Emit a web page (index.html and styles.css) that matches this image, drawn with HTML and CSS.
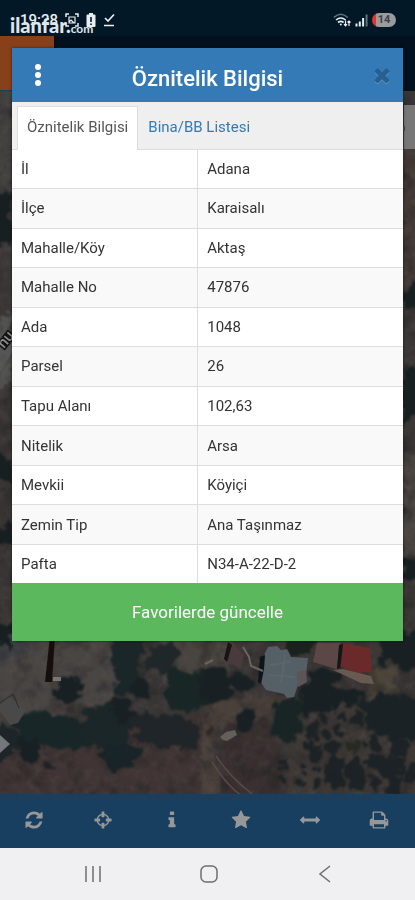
FILE: index.html
```html
<!DOCTYPE html>
<html lang="tr">

<head>
    <meta charset="UTF-8">
    <meta name="viewport" content="width=device-width, initial-scale=1.0">
    <title>Öznitelik Bilgisi</title>
    <link rel="stylesheet" href="styles.css">
</head>

<body>
    <div class="status-bar">
        <span class="watermark">ilanfar.<small>com</small></span>
        <div class="status-left">
            <span class="clock">19:28</span>
            <svg width="14" height="14" viewBox="0 0 14 14" fill="none" stroke="currentColor" stroke-width="1.5">
                <path d="M1 4V1h3M10 1h3v3M13 10v3h-3M4 13H1v-3" />
                <path d="M4 4h6v6H4zM4 9l2-2 3 3" stroke-width="1.2" />
            </svg>
            <svg width="10" height="14" viewBox="0 0 10 14">
                <path d="M3 0h4v1.500h1.500q1 0 1 1V13q0 1-1 1h-7q-1 0-1-1V2.500q0-1 1-1H3z" fill="currentColor" />
                <path d="M5 4v5M5 10.500v1.500" stroke="#021827" stroke-width="1.600" />
            </svg>
            <svg width="12" height="14" viewBox="0 0 12 14" fill="none" stroke="currentColor" stroke-width="1.700">
                <path d="M2 5l3 3 6-6.500M1 12.500h10" />
            </svg>
        </div>
        <div class="status-right">
            <svg width="18" height="14" viewBox="0 0 18 14" fill="none" stroke="currentColor" stroke-width="1.600">
                <path d="M.8 4.500q7-6.500 14 0" stroke="#60707c" />
                <path d="M3 7q4.800-4 9.600 0M5 9.500q2.800-2.200 5.600 0" />
                <circle cx="7.800" cy="11.500" r="1" fill="currentColor" stroke="none" />
                <path d="M12.500 7.500V13M11 11.200l1.500 1.600 1.500-1.600M16 13V8M14.500 9.500L16 8l1.500 1.500" stroke-width="1.200" />
            </svg>
            <svg width="13" height="14" viewBox="0 0 13 14" stroke="currentColor" stroke-width="2">
                <path d="M1.500 13.500v-3M4.800 13.500v-5M8.100 13.500V5" />
                <path d="M11.600 13.500v-12" stroke="#60707c" />
            </svg>
            <span class="battery">14</span>
        </div>
    </div>

    <div class="app-header">
        <div class="app-logo"></div>
    </div>

    <main class="map">
        <svg class="map-image" viewBox="0 91 415 703" preserveAspectRatio="xMidYMax slice" aria-hidden="true">
            <defs>
                <filter id="rough" x="-5%" y="-5%" width="110%" height="110%" color-interpolation-filters="sRGB">
                    <feTurbulence type="fractalNoise" baseFrequency="0.09" numOctaves="3" seed="4" result="n" />
                    <feDisplacementMap in="SourceGraphic" in2="n" scale="18" xChannelSelector="R" yChannelSelector="G" />
                    <feGaussianBlur stdDeviation="1" />
                </filter>
                <filter id="soft">
                    <feGaussianBlur stdDeviation="0.6" />
                </filter>
                <filter id="grain" x="0" y="0" width="100%" height="100%" color-interpolation-filters="sRGB">
                    <feTurbulence type="fractalNoise" baseFrequency="0.06" numOctaves="4" seed="9" />
                    <feColorMatrix values="0 0 0 0 0.09  0 0 0 0 0.1  0 0 0 0 0.1  2.5 0 0 0 -1.05" />
                </filter>
                <filter id="light" x="0" y="0" width="100%" height="100%" color-interpolation-filters="sRGB">
                    <feTurbulence type="fractalNoise" baseFrequency="0.12" numOctaves="3" seed="21" />
                    <feColorMatrix values="0 0 0 0 0.42  0 0 0 0 0.42  0 0 0 0 0.41  2.5 0 0 0 -1.1" />
                </filter>
            </defs>
            <rect y="91" width="415" height="703" fill="#3b3736" />
            <g filter="url(#rough)">
                <path d="M-10 630h125v70l-50 12-75 20z" fill="#494543" />
                <path d="M-10 630h66L-10 672z" fill="#3e4045" />
                <path d="M-10 740q70-35 160-15l60-15v99H-10z" fill="#403534" />
                <path d="M160 630h75l-10 60-60 20z" fill="#48443f" />
                <path d="M205 700l88-5-40 30-45 5 16 74h-24z" fill="#4a403b" />
                <path d="M225 725l45-5 30 89h-80z" fill="#3a3030" />
                <path d="M290 715l40-25 90 10v109H288z" fill="#3f3936" />
                <path d="M372 672l25-5v25l-28 6z" fill="#4b4439" />
                <path d="M-10 91h22v160h-22z" fill="#444141" />
                <path d="M-10 330l22-20v70l-22 20z" fill="#51524f" />
                <path d="M403 150h22v135h-22z" fill="#453b37" />
                <path d="M403 455h22v100h-22z" fill="#4b4541" />
            </g>
            <rect y="91" width="415" height="703" filter="url(#light)" opacity=".14" />
            <rect y="91" width="415" height="703" filter="url(#grain)" opacity=".35" />
            <g filter="url(#rough)" fill="#182024">
                <path d="M112 635h30l1 33-10 26-18-2z" fill="#1b2629" />
                <path d="M148 654l24-13 9 16-10 13-27-1z" fill="#20272a" />
                <path d="M168 669l28 3 14-3v36l-20 9-25-9z" fill="#182626" />
                <path d="M200 668l22-1 12 10-5 22-17 5-12-4z" />
                <path d="M56 678l22-2 4 20-14 8-12-7z" />
                <path d="M12 718l28-8 20 5 30 5 8 25-25 8-32-8-20-4z" fill="#192627" />
                <path d="M83 710l29-8 21 14-2 27-22 6-24-10z" fill="#1b2628" />
                <path d="M130 716l22-3 30 4 17 10-5 19-27 2-30-8z" fill="#1f2528" />
                <path d="M96 752l25-9 19 3-5 22-25 2z" fill="#182427" />
                <path d="M16 739l24 1 3 19-13 5-12-9z" />
                <path d="M-8 728l20-4 8 16-12 22h-16z" fill="#1e2528" />
                <path d="M113 696l14 3 7 18-12 9-11-15z" />
                <path d="M133 681l13-2 5 12-10 9-9-8z" />
                <path d="M284 636h30v15l-16 4-13-6z" fill="#18221f" />
                <path d="M380 632h43v38l-24-3-8-10-9 8z" />
                <path d="M235 672l14-1 5 14-12 7-9-8z" />
                <path d="M274 704l18-7 12 6-4 30-14 10-14-12z" fill="#182524" />
                <path d="M300 690l16-9 24 8-2 19-22 8-17-6z" />
                <path d="M310 670l17-2 14 9-8 13-23-6z" />
                <path d="M336 691l22-4 7 13-20 7z" />
                <path d="M361 703l19-9 22 4 23-3v42l-28 4-28-7z" fill="#1a2226" />
                <path d="M236 711l18-3-3 21-12 7z" />
            </g>
            <g filter="url(#rough)" fill="#171f21">
                <path d="M-8 190l20 5v50H-8z" />
                <path d="M-8 450l20 10v22H-8zM-8 530l20-8v22H-8zM-8 625h20v25l-12-3z" />
                <path d="M403 290l20-8v20l-20 8zM403 365l20 5v45l-20 7zM403 560l20 5v18l-20-4z" />
            </g>
            <!-- orchard -->
            <g filter="url(#rough)" fill="#1c2225">
                <circle cx="325" cy="718" r="5" />
                <circle cx="342" cy="717" r="5" />
                <circle cx="356" cy="718" r="7" />
                <circle cx="312" cy="732" r="7" />
                <circle cx="325" cy="735" r="5" />
                <circle cx="339" cy="733" r="5" />
                <circle cx="315" cy="750" r="9" />
                <circle cx="333" cy="748" r="7" />
                <circle cx="355" cy="747" r="8" fill="#282923" />
                <circle cx="373" cy="744" r="8" />
                <circle cx="399" cy="747" r="10" />
                <circle cx="336" cy="765" r="10" />
                <ellipse cx="356" cy="773" rx="9" ry="16" />
                <circle cx="335" cy="782" r="9" />
                <circle cx="375" cy="762" r="9" />
                <circle cx="391" cy="767" r="11" />
                <circle cx="375" cy="782" r="6" />
                <circle cx="393" cy="784" r="9" />
                <circle cx="410" cy="775" r="10" />
                <circle cx="284" cy="763" r="6" />
                <circle cx="304" cy="769" r="3" />
                <circle cx="317" cy="768" r="3" />
                <circle cx="282" cy="780" r="4" />
                <circle cx="302" cy="783" r="3" />
                <circle cx="318" cy="784" r="3" />
                <circle cx="211" cy="730" r="4" fill="#302723" />
                <circle cx="49" cy="767" r="5" />
            </g>
            <!-- buildings and tracks -->
            <g filter="url(#soft)">
                <path d="M50 636h5l-3 46h-7z" fill="#171111" />
                <path d="M231 641l13 14-3 14-14-8z" fill="#4a3a3b" />
                <path d="M228 642l4 3-5 17-3-3z" fill="#131417" />
                <path d="M265 653l3-6 9-1 4 4 6-1 4 8 17 1-3 24-7 3-4 12-7 1-3-4-18-4-6-9z" fill="#555e66" />
                <path d="M270 665l20-3M268 675l26 2M285 655l-4 28" stroke="#5c656c" stroke-width="2" />
                <path d="M260 657l5-2-1 14-3 15-3-2z" fill="#101418" />
                <path d="M297 672l9-2 1 12-9 5z" fill="#5c5558" />
                <path d="M317 643h23l-3 26-24-7z" fill="#5c4647" />
                <path d="M343 643l27 5 2 24-13 1-18-6z" fill="#6a292a" />
                <path d="M339 645l4-1-3 24-3 1z" fill="#151315" />
                <path d="M333 670l10-1 28 7 3 8-13-1z" fill="#675a52" />
                <path d="M243 647l6 10 2 9 12 5M205 664l8-4" fill="none" stroke="#68635c" stroke-width="2" />
                <path d="M53 677h8v4h-8z" fill="#787675" />
                <path d="M0 705l9-9 17 14-8 13-8 2-10-14z" fill="#4a4948" />
                <path d="M0 703l13-9 6 14" fill="none" stroke="#2c2929" />
                <path d="M0 735l10 9-10 9z" fill="#74777a" />
                <path d="M220 737l6-5 9-2 2 5-10 6-4-1z" fill="#625e5b" />
                <path d="M216 756q13 20 36 38M212 762q15 24 30 34" fill="none" stroke="#564a44" stroke-width="1.500" />
                <path d="M0 346l12-13v20L0 372z" fill="#5d5f60" opacity=".5" />
                <path d="M404 105h11v44h-11z" fill="#777" />
                <path d="M403 126h2v5h-2z" fill="#474747" />
            </g>
            <text x="4" y="349" class="road-name" transform="rotate(-50 4 349)">nu</text>
        </svg>
    </main>

    <div class="toolbar">
        <button class="tool" aria-label="Yenile"><svg class="icon" viewBox="0 0 1792 1792"><path d="M1639 1056q0 5-1 7-64 268-268 434.500t-478 166.500q-146 0-282.500-55t-243.500-157l-129 129q-19 19-45 19t-45-19-19-45v-448q0-26 19-45t45-19h448q26 0 45 19t19 45-19 45l-137 137q71 66 161 102t187 36q134 0 250-65t186-179q11-17 53-117 8-23 30-23h192q13 0 22.500 9.500t9.500 22.500zm25-800v448q0 26-19 45t-45 19h-448q-26 0-45-19t-19-45 19-45l138-138q-148-137-349-137-134 0-250 65t-186 179q-11 17-53 117-8 23-30 23h-199q-13 0-22.500-9.500t-9.500-22.500v-7q65-268 270-434.500t480-166.500q146 0 284 55.500t245 156.500l130-129q19-19 45-19t45 19 19 45z" /></svg></button>
        <button class="tool" aria-label="Konum"><svg class="icon" viewBox="0 0 1792 1792"><path d="M1325 1024h-109q-26 0-45-19t-19-45v-128q0-26 19-45t45-19h109q-32-108-112.500-188.500t-188.500-112.500v109q0 26-19 45t-45 19h-128q-26 0-45-19t-19-45v-109q-108 32-188.500 112.500t-112.500 188.500h109q26 0 45 19t19 45v128q0 26-19 45t-45 19h-109q32 108 112.500 188.500t188.500 112.500v-109q0-26 19-45t45-19h128q26 0 45 19t19 45v109q108-32 188.500-112.500t112.500-188.500zm339-192v128q0 26-19 45t-45 19h-143q-37 161-154.500 278.500t-278.500 154.500v143q0 26-19 45t-45 19h-128q-26 0-45-19t-19-45v-143q-161-37-278.500-154.500t-154.500-278.500h-143q-26 0-45-19t-19-45v-128q0-26 19-45t45-19h143q37-161 154.500-278.500t278.500-154.500v-143q0-26 19-45t45-19h128q26 0 45 19t19 45v143q161 37 278.500 154.500t154.500 278.500h143q26 0 45 19t19 45z" /></svg></button>
        <button class="tool" aria-label="Bilgi"><svg class="icon" viewBox="0 0 1792 1792"><path d="M1216 1344v128q0 26-19 45t-45 19h-512q-26 0-45-19t-19-45v-128q0-26 19-45t45-19h64v-384h-64q-26 0-45-19t-19-45v-128q0-26 19-45t45-19h384q26 0 45 19t19 45v576h64q26 0 45 19t19 45zm-128-1152v192q0 26-19 45t-45 19h-256q-26 0-45-19t-19-45v-192q0-26 19-45t45-19h256q26 0 45 19t19 45z" /></svg></button>
        <button class="tool" aria-label="Favoriler"><svg class="icon" viewBox="0 0 1792 1792"><path d="M1728 647q0 22-26 48l-363 354 86 500q1 7 1 20 0 21-10.500 35.500t-30.500 14.500q-19 0-40-12l-449-236-449 236q-22 12-40 12-21 0-31.500-14.500t-10.500-35.500q0-6 2-20l86-500-364-354q-25-27-25-48 0-37 56-46l502-73 225-455q19-41 49-41t49 41l225 455 502 73q56 9 56 46z" /></svg></button>
        <button class="tool" aria-label="Ölçüm"><svg class="icon" viewBox="0 0 1792 1792"><path d="M1792 896q0 26-19 45l-256 256q-19 19-45 19t-45-19-19-45v-128h-1024v128q0 26-19 45t-45 19-45-19l-256-256q-19-19-19-45t19-45l256-256q19-19 45-19t45 19 19 45v128h1024v-128q0-26 19-45t45-19 45 19l256 256q19 19 19 45z" /></svg></button>
        <button class="tool" aria-label="Yazdır"><svg class="icon" viewBox="0 0 1792 1792"><path d="M448 1536h896v-256h-896v256zm0-640h896v-384h-160q-40 0-68-28t-28-68v-160h-640v640zm1152 64q0-26-19-45t-45-19-45 19-19 45 19 45 45 19 45-19 19-45zm128 0v416q0 13-9.500 22.500t-22.500 9.500h-224v160q0 40-28 68t-68 28h-960q-40 0-68-28t-28-68v-160h-224q-13 0-22.500-9.500t-9.500-22.500v-416q0-79 56.500-135.500t135.500-56.500h64v-544q0-40 28-68t68-28h672q40 0 88 20t76 48l152 152q28 28 48 76t20 88v256h64q79 0 135.500 56.500t56.500 135.500z" /></svg></button>
    </div>

    <div class="nav-bar">
        <button class="nav-button" aria-label="Son uygulamalar"><svg width="18" height="18" viewBox="0 0 18 18"><path d="M2 1v16M9 1v16M16 1v16" /></svg></button>
        <button class="nav-button" aria-label="Ana ekran"><svg width="18" height="18" viewBox="0 0 18 18"><rect x="1" y="1" width="16" height="16" rx="5" /></svg></button>
        <button class="nav-button" aria-label="Geri"><svg width="18" height="18" viewBox="0 0 18 18"><path d="M14 1L4 9l10 8" /></svg></button>
    </div>

    <div class="modal" role="dialog" aria-labelledby="modalTitle">
        <div class="modal-header">
            <button class="menu-button" aria-label="Menü"><svg width="8" height="24" viewBox="0 0 8 24"><circle cx="4" cy="4" r="3" /><circle cx="4" cy="12" r="3" /><circle cx="4" cy="20" r="3" /></svg></button>
            <h1 id="modalTitle">Öznitelik Bilgisi</h1>
            <button class="close-button" aria-label="Kapat"><svg width="22" height="22" viewBox="0 0 1792 1792"><path d="M1490 1322q0 40-28 68l-136 136q-28 28-68 28t-68-28l-294-294-294 294q-28 28-68 28t-68-28l-136-136q-28-28-28-68t28-68l294-294-294-294q-28-28-28-68t28-68l136-136q28-28 68-28t68 28l294 294 294-294q28-28 68-28t68 28l136 136q28 28 28 68t-28 68l-294 294 294 294q28 28 28 68z" /></svg></button>
        </div>
        <nav class="tabs">
            <a href="#oznitelik" class="tab active">Öznitelik Bilgisi</a>
            <a href="#bina" class="tab">Bina/BB Listesi</a>
        </nav>
        <table class="info-table" id="oznitelik">
            <tbody>
                <tr><th scope="row">İl</th><td>Adana</td></tr>
                <tr><th scope="row">İlçe</th><td>Karaisalı</td></tr>
                <tr><th scope="row">Mahalle/Köy</th><td>Aktaş</td></tr>
                <tr><th scope="row">Mahalle No</th><td>47876</td></tr>
                <tr><th scope="row">Ada</th><td>1048</td></tr>
                <tr><th scope="row">Parsel</th><td>26</td></tr>
                <tr><th scope="row">Tapu Alanı</th><td>102,63</td></tr>
                <tr><th scope="row">Nitelik</th><td>Arsa</td></tr>
                <tr><th scope="row">Mevkii</th><td>Köyiçi</td></tr>
                <tr><th scope="row">Zemin Tip</th><td>Ana Taşınmaz</td></tr>
                <tr><th scope="row">Pafta</th><td>N34-A-22-D-2</td></tr>
            </tbody>
        </table>
        <button class="favorite-button">Favorilerde güncelle</button>
    </div>
</body>

</html>
```

FILE: styles.css
```css
* {
    box-sizing: border-box;
}

body {
    position: relative;
    display: flex;
    flex-direction: column;
    min-height: 100vh;
    margin: 0;
    font-family: Roboto, "Liberation Sans", sans-serif;
    font-size: 15px;
    line-height: 20px;
    color: #333;
    background-color: #02111d;
}

button {
    padding: 0;
    border: none;
    background: none;
    font: inherit;
    cursor: pointer;
}

svg {
    display: block;
}

.status-bar {
    position: relative;
    display: flex;
    justify-content: space-between;
    align-items: center;
    padding: 4px 19px 0 20px;
    height: 36px;
    color: #e8eef2;
    background-color: #021827;
}

.status-left,
.status-right {
    display: flex;
    align-items: center;
    gap: 7px;
}

.status-right {
    gap: 4px;
}

.clock {
    font-size: 15px;
    font-weight: 500;
}

/* site mark printed over the clock */
.watermark {
    position: absolute;
    top: 15px;
    left: 10px;
    font-family: Lato, "Open Sans", sans-serif;
    font-size: 20px;
    font-weight: 900;
    color: #dfe5e9;
}

.watermark small {
    font-size: 12px;
    font-weight: 700;
}

.battery {
    width: 24px;
    border-radius: 7px;
    font-size: 11px;
    font-weight: 700;
    line-height: 14px;
    text-align: center;
    color: #3c4247;
    background: linear-gradient(to right, #e2352f 4px, #999b9e 4px);
}

.app-header {
    height: 55px;
}

.app-logo {
    width: 54px;
    height: 100%;
    background-color: #88401b;
    border-bottom: 1px solid #164257;
}

.map {
    position: relative;
    flex: 1;
    overflow: hidden;
}

.map-image {
    position: absolute;
    width: 100%;
    height: 100%;
}

.road-name {
    font-size: 15px;
    font-weight: 500;
    fill: #8c8c8c;
    stroke: #111;
    stroke-width: 3px;
    paint-order: stroke;
}

.toolbar {
    display: grid;
    grid-template-columns: repeat(6, 1fr);
    height: 54px;
    padding: 0 2px 2px 0;
    background-color: #193f60;
}

.tool {
    display: flex;
    justify-content: center;
    align-items: center;
}

.icon {
    width: 20px;
    height: 20px;
    fill: #959799;
}

.nav-bar {
    display: grid;
    grid-template-columns: repeat(3, 1fr);
    height: 52px;
    padding: 0 32px 0 35px;
    background-color: #f0f0f3;
}

.nav-button {
    display: flex;
    justify-content: center;
    align-items: center;
}

.nav-button svg {
    fill: none;
    stroke: #6d6d70;
    stroke-width: 1.5px;
}

.modal {
    position: absolute;
    top: 48px;
    left: 12px;
    right: 12px;
    background-color: #fff;
    box-shadow: 0 0 3px rgba(0, 0, 0, 0.5);
}

.modal-header {
    display: grid;
    grid-template-columns: 52px 1fr 52px;
    align-items: center;
    height: 54px;
    background-color: #337ab7;
}

.modal-header h1 {
    margin: 0;
    padding-top: 8px;
    font-size: 22px;
    font-weight: 500;
    line-height: 28px;
    text-align: center;
    color: #fff;
}

.menu-button svg {
    margin: 0 auto;
    fill: #fff;
}

.close-button {
    justify-self: end;
    padding-right: 10px;
}

.close-button svg {
    fill: #295f8f;
    filter: drop-shadow(0 1px 0 #5c95c5);
}

.tabs {
    display: flex;
    height: 48px;
    padding: 4px 5px 0;
    border-bottom: 1px solid #ddd;
    background-color: #efefef;
}

.tab {
    padding: 10px 9px 0;
    border: 1px solid transparent;
    border-bottom: none;
    color: #337ab7;
    text-decoration: none;
}

.tab.active {
    margin-bottom: -1px;
    border-color: #ddd;
    color: #555;
    background-color: #fff;
}

.info-table {
    width: 100%;
    height: 433px;
    border-collapse: collapse;
    table-layout: fixed;
}

.info-table tr:nth-child(even) {
    background-color: #f9f9f9;
}

.info-table tr + tr {
    border-top: 1px solid #ddd;
}

.info-table th,
.info-table td {
    padding: 0 9px;
    font-weight: 400;
    text-align: left;
}

.info-table th {
    width: 47.5%;
    border-right: 1px solid #ddd;
}

.favorite-button {
    display: block;
    width: 100%;
    height: 58px;
    font-size: 17px;
    color: #fff;
    background-color: #5cb85c;
}
```
